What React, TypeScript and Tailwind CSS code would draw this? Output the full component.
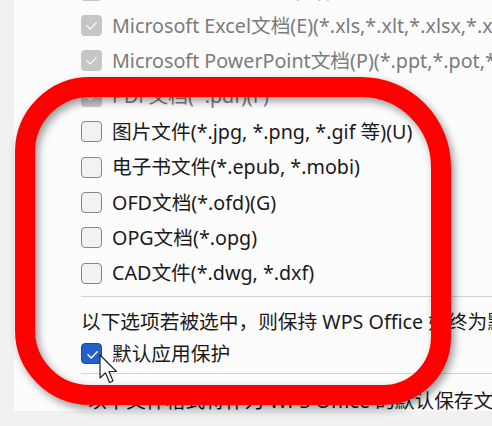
import React from "react";

type BoxState = "disabled" | "off" | "on";

interface Row {
  label: string;
  state: BoxState;
}

const rows: Row[] = [
  { label: "Microsoft Word文档(W)(*.doc,*.dot,*.docx,*.dotx,*.docm,*.dotm)", state: "disabled" },
  { label: "Microsoft Excel文档(E)(*.xls,*.xlt,*.xlsx,*.xlsm,*.xltx,*.xltm,*.csv)", state: "disabled" },
  { label: "Microsoft PowerPoint文档(P)(*.ppt,*.pot,*.pps,*.pptx,*.potx,*.ppsx)", state: "disabled" },
  { label: "PDF文档(*.pdf)(F)", state: "disabled" },
  { label: "图片文件(*.jpg, *.png, *.gif 等)(U)", state: "off" },
  { label: "电子书文件(*.epub, *.mobi)", state: "off" },
  { label: "OFD文档(*.ofd)(G)", state: "off" },
  { label: "OPG文档(*.opg)", state: "off" },
  { label: "CAD文件(*.dwg, *.dxf)", state: "off" },
];

function Check({ color }: { color: string }) {
  return (
    <svg viewBox="0 0 21 21" className="w-[21px] h-[21px]" fill="none">
      <path d="M6 10.8l3.2 3.1 6-6.2" stroke={color} strokeWidth={1.4} strokeLinecap="round" strokeLinejoin="round" />
    </svg>
  );
}

function Checkbox({ state }: { state: BoxState }) {
  if (state === "disabled") {
    return (
      <div className="w-[21px] h-[21px] shrink-0 rounded-[4px] bg-[#c6c6c6]">
        <Check color="#f4f4f4" />
      </div>
    );
  }
  if (state === "on") {
    return (
      <div className="w-[21px] h-[21px] shrink-0 rounded-[4px] bg-[#2262c6] border border-[#1b4f9f]">
        <Check color="#ffffff" />
      </div>
    );
  }
  return <div className="w-[21px] h-[21px] shrink-0 rounded-[4px] bg-[#f2f2f4] border-[1.5px] border-[#858585]" />;
}

function OptionRow({ label, state }: Row) {
  return (
    <div className="h-[35.4px] flex items-center gap-[10px] whitespace-nowrap">
      <Checkbox state={state} />
      <span className={state === "disabled" ? "text-[#7b7b7b]" : "text-[#1a1a1a]"}>{label}</span>
    </div>
  );
}

export default function App() {
  return (
    <div className="relative w-[492px] h-[426px] overflow-hidden bg-[#f1f1f1] font-['Noto_Sans','Noto_Sans_CJK_SC',sans-serif] text-[19.7px] leading-none">
      <div className="ml-[14px] h-[411px] bg-[#fcfcfc] overflow-hidden pl-[67px]">
        <div className="-mt-[27.6px]">
          {rows.map((r, i) => (
            <OptionRow key={i} {...r} />
          ))}
        </div>
        <div className="mt-[5px] h-px bg-[#d4d4d4]" />
        <div className="mt-[11px] h-[28px] flex items-center whitespace-nowrap text-[#1a1a1a]">
          以下选项若被选中，则保持 WPS Office 始终为默认应用程序
        </div>
        <OptionRow label="默认应用保护" state="on" />
        <div className="mt-[2px] h-px bg-[#d4d4d4]" />
        <div className="mt-[9px] h-[35px] flex items-center whitespace-nowrap text-[#1a1a1a] pl-[6px]">
          以下文件格式将作为 WPS Office 的默认保存文件格式
        </div>
      </div>

      {/* red highlight ring */}
      <svg
        className="absolute left-0 top-0 w-[492px] h-[426px] pointer-events-none drop-shadow-[3px_4px_4px_rgba(0,0,0,0.4)]"
        viewBox="0 0 492 426"
        fill="none"
      >
        <path
          d="M90 87 H361 A80 80 0 0 1 441 167 V337 A58 58 0 0 1 383 395 H90 A65 65 0 0 1 25 330 V152 A65 65 0 0 1 90 87 Z"
          stroke="#ff0000"
          strokeWidth={20}
        />
      </svg>

      {/* mouse pointer */}
      <svg className="absolute left-[99px] top-[354px] w-[22px] h-[31px]" viewBox="0 0 22 31" fill="none">
        <path
          d="M1 1 V24 L6.5 18.8 L10.5 28.5 L14 27 L10 17.5 H17.5 Z"
          fill="#ffffff"
          stroke="#222222"
          strokeWidth={1.2}
          strokeLinejoin="round"
        />
      </svg>
    </div>
  );
}
